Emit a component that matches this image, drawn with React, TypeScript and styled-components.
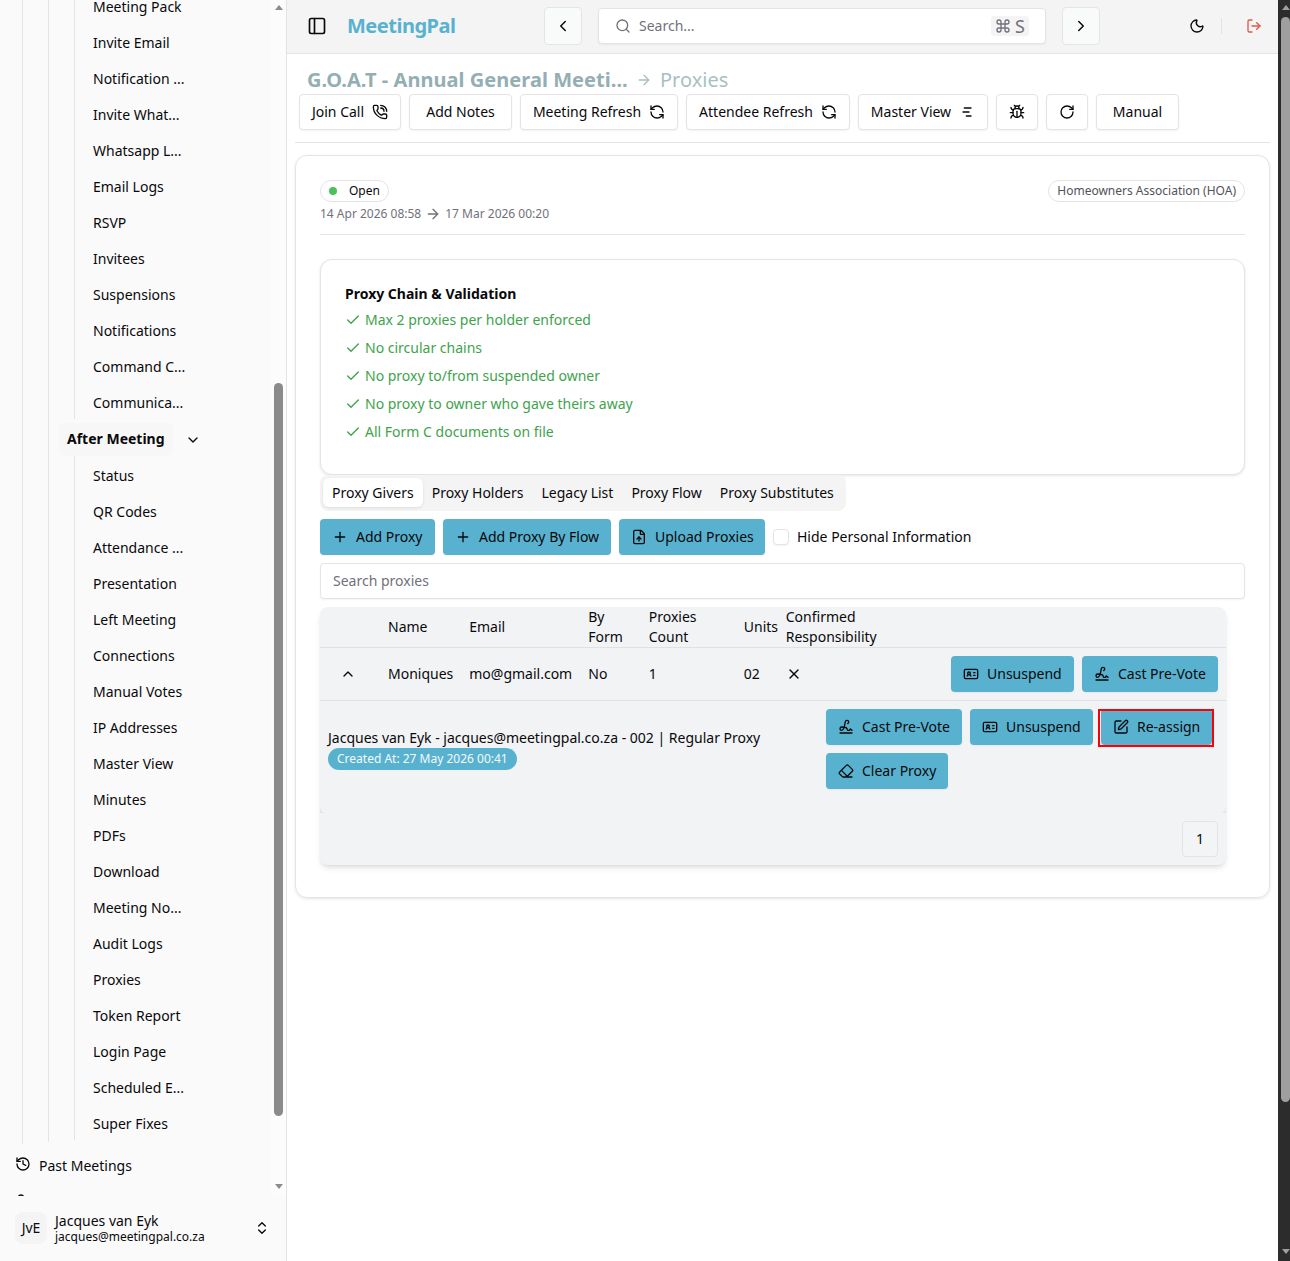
import styled, { createGlobalStyle } from "styled-components";
import {
  ArrowRight,
  Bug,
  Check,
  ChevronDown,
  ChevronLeft,
  ChevronRight,
  ChevronsUpDown,
  ChevronUp,
  Command,
  Eraser,
  FileUp,
  History,
  IdCard,
  LogOut,
  Moon,
  PanelLeft,
  PhoneCall,
  Plus,
  RefreshCcw,
  RotateCw,
  Search,
  Signature,
  SquarePen,
  UserPlus,
  X,
} from "lucide-react";

const GlobalStyle = createGlobalStyle`
  * {
    box-sizing: border-box;
  }

  body {
    margin: 0;
    background: #ffffff;
    color: #09090b;
    font-family: "Noto Sans", sans-serif;
    font-size: 14px;
    line-height: 20px;
    overflow: hidden;
  }

  button, input {
    font: inherit;
    color: inherit;
  }

  svg {
    flex-shrink: 0;
  }
`;

const Page = styled.div`
  display: flex;
  width: 1290px;
  height: 1261px;
  overflow: hidden;
`;

/* sidebar */

const Sidebar = styled.aside`
  display: flex;
  flex-direction: column;
  width: 287px;
  flex-shrink: 0;
  background: #fafafa;
  border-right: 1px solid #e4e4e7;
`;

const SidebarScroll = styled.div`
  display: flex;
  height: 1196px;
  overflow: hidden;
`;

const SidebarMenu = styled.nav`
  flex: 1;
`;

const Branch = styled.div`
  margin-left: 25px;
  padding-bottom: 2px;
  border-left: 1px solid #e4e4e7;
`;

const RootBranch = styled(Branch)`
  margin-left: 22px;
`;

const SubList = styled.ul<{ $first?: boolean }>`
  display: flex;
  flex-direction: column;
  gap: 2px;
  margin: ${(p) => (p.$first ? "-11px" : "0")} 0 0 25px;
  padding: ${(p) => (p.$first ? "0" : "2px")} 0 0 18px;
  border-left: 1px solid #e4e4e7;
  list-style: none;
`;

const SubItem = styled.li`
  height: 34px;
  line-height: 36px;
  white-space: nowrap;
`;

const GroupRow = styled.div`
  display: flex;
  align-items: center;
  gap: 12px;
  margin: 4px 0 0 10px;
`;

const GroupLabel = styled.div`
  height: 33px;
  padding: 0 8px;
  line-height: 32px;
  font-weight: 700;
  width: 114px;
  white-space: nowrap;
  background: #f7f7f8;
  border-radius: 6px;
`;

const MenuRow = styled.div`
  display: flex;
  align-items: center;
  gap: 8px;
  height: 32px;
  margin: 6px 0 0 15px;

  svg {
    margin-top: -4px;
  }

  & + & {
    margin-top: 5px;
  }
`;

const ScrollTrack = styled.div<{ $dark?: boolean }>`
  display: flex;
  flex-direction: column;
  align-items: ${(p) => (p.$dark ? "flex-end" : "center")};
  width: ${(p) => (p.$dark ? "12px" : "15px")};
  height: 100%;
  flex-shrink: 0;
  background: ${(p) => (p.$dark ? "#2c2c2c" : "#fcfcfc")};
`;

const ScrollArrow = styled.div<{ $down?: boolean; $dark?: boolean }>`
  width: 0;
  height: 0;
  margin: ${(p) => (p.$down ? "auto 0 7px" : "5px 0 0")};
  border: solid transparent;
  border-width: ${(p) => (p.$down ? "5px 4.5px 0" : "0 4.5px 5px")};
  border-top-color: ${(p) => (p.$down ? (p.$dark ? "#a0a0a0" : "#8b8b8b") : "transparent")};
  border-bottom-color: ${(p) => (p.$down ? "transparent" : p.$dark ? "#a0a0a0" : "#8b8b8b")};
`;

const ScrollThumb = styled.div<{ $top: number; $height: number; $dark?: boolean }>`
  width: 9px;
  height: ${(p) => p.$height}px;
  margin-top: ${(p) => p.$top}px;
  border-radius: 5px;
  background: ${(p) => (p.$dark ? "#9f9f9f" : "#8b8b8b")};
`;

const UserRow = styled.div`
  display: flex;
  align-items: center;
  height: 64px;
  padding: 0 16px 0 15px;
`;

const Avatar = styled.div`
  width: 32px;
  height: 32px;
  line-height: 32px;
  text-align: center;
  background: #f4f4f5;
  border-radius: 8px;
`;

const UserText = styled.div`
  flex: 1;
  margin-left: 8px;
  line-height: 17px;
`;

const UserEmail = styled.div`
  font-size: 12px;
  line-height: 15px;
`;

/* main column */

const Main = styled.main`
  flex: 1;
  min-width: 0;
`;

const TopBar = styled.header`
  display: flex;
  align-items: center;
  height: 54px;
  padding: 0 16px 1px 20px;
  background: #f4f4f5;
  border-bottom: 1px solid #e4e4e7;
`;

const Brand = styled.div`
  width: 197px;
  margin-left: 20px;
  font-size: 20px;
  font-weight: 700;
  letter-spacing: -0.5px;
  color: #58b2cf;
`;

const NavButton = styled.button`
  display: flex;
  align-items: center;
  justify-content: center;
  width: 38px;
  height: 38px;
  padding: 0;
  background: #f9fafa;
  border: 1px solid #e4e4e7;
  border-radius: 4px;
`;

const SearchBox = styled.div`
  display: flex;
  align-items: center;
  gap: 8px;
  width: 448px;
  height: 36px;
  margin: 0 16px;
  padding: 0 16px;
  color: #71717a;
  background: #ffffff;
  border: 1px solid #e4e4e7;
  border-radius: 4px;
  box-shadow: 0 1px 2px rgba(0, 0, 0, 0.05);
`;

const Shortcut = styled.kbd`
  display: flex;
  align-items: center;
  gap: 4px;
  height: 20px;
  margin-left: auto;
  padding: 0 4px;
  font-family: inherit;
  font-size: 18px;
  background: #f4f4f5;
  border-radius: 3px;
`;

const TopActions = styled.div`
  display: flex;
  align-items: center;
  margin-left: auto;
`;

const Divider = styled.div`
  width: 1px;
  height: 16px;
  margin: 0 24px 0 16px;
  background: #e4e4e7;
`;

const Content = styled.div`
  padding: 12px 8px;
`;

const Crumbs = styled.div`
  display: flex;
  align-items: center;
  gap: 8px;
  height: 28px;
  padding-left: 12px;
  font-size: 20px;
  color: #a9bfc2;

  b {
    width: 321px;
    letter-spacing: 0.04px;
    color: #94afb3;
    white-space: nowrap;
  }
`;

const Toolbar = styled.div`
  display: flex;
  gap: 8px;
  height: 49px;
  padding-left: 4px;
  border-bottom: 1px solid #e4e4e7;
`;

const OutlineButton = styled.button<{ $width: number }>`
  display: flex;
  align-items: center;
  justify-content: center;
  gap: 8px;
  width: ${(p) => p.$width}px;
  height: 36px;
  padding: 0;
  white-space: nowrap;
  background: #ffffff;
  border: 1px solid #e4e4e7;
  border-radius: 4px;
  box-shadow: 0 1px 2px rgba(0, 0, 0, 0.05);
`;

const Card = styled.section`
  height: 743px;
  margin-top: 12px;
  padding: 24px;
  border: 1px solid #e4e4e7;
  border-radius: 12px;
  box-shadow: 0 1px 3px rgba(0, 0, 0, 0.1);
`;

const StatusRow = styled.div`
  display: flex;
  justify-content: space-between;
`;

const Badge = styled.span<{ $muted?: boolean }>`
  display: flex;
  align-items: center;
  height: 22px;
  padding: 0 8px;
  font-size: 12px;
  color: ${(p) => (p.$muted ? "#52525b" : "#09090b")};
  border: 1px solid #e4e4e7;
  border-radius: 11px;
`;

const Dot = styled.span`
  width: 8px;
  height: 8px;
  margin-right: 12px;
  background: #4ac25a;
  border-radius: 50%;
`;

const Dates = styled.div`
  display: flex;
  align-items: center;
  gap: 4px;
  height: 33px;
  padding-bottom: 9px;
  font-size: 12px;
  color: #71717a;
  border-bottom: 1px solid #e4e4e7;
`;

const RulesCard = styled.section`
  height: 216px;
  margin-top: 24px;
  padding: 24px;
  background: #ffffff;
  border: 1px solid #e4e4e7;
  border-radius: 12px;
  box-shadow: 0 1px 3px rgba(0, 0, 0, 0.1);
`;

const RulesTitle = styled.h3`
  margin: 0 0 2px;
  font-size: 14px;
  font-weight: 700;
  line-height: 20px;
`;

const Rule = styled.div`
  display: flex;
  align-items: center;
  gap: 4px;
  height: 28px;
  color: #3ea34c;
`;

const Tabs = styled.div`
  display: flex;
  width: 526px;
  height: 36px;
  padding: 3px;
  background: #f4f4f5;
  border-radius: 8px;
`;

const Tab = styled.div<{ $active?: boolean }>`
  height: 29px;
  padding: 0 9px;
  line-height: 29px;
  white-space: nowrap;
  background: ${(p) => (p.$active ? "#ffffff" : "none")};
  border-radius: 6px;
  box-shadow: ${(p) => (p.$active ? "0 1px 3px rgba(0, 0, 0, 0.1)" : "none")};
`;

const Actions = styled.div`
  display: flex;
  align-items: center;
  gap: 8px;
  margin: 8px 0;
`;

const PrimaryButton = styled.button<{ $width: number }>`
  display: flex;
  align-items: center;
  gap: 8px;
  width: ${(p) => p.$width}px;
  height: 36px;
  padding: 0 12px;
  white-space: nowrap;
  background: #58b2cf;
  border: none;
  border-radius: 4px;
  box-shadow: 0 1px 2px rgba(0, 0, 0, 0.05);
`;

const Checkbox = styled.span`
  width: 16px;
  height: 16px;
  border: 1px solid #e4e4e7;
  border-radius: 4px;
  background: #ffffff;
  box-shadow: 0 1px 2px rgba(0, 0, 0, 0.05);
`;

const ProxySearch = styled.input`
  display: block;
  width: 100%;
  height: 36px;
  padding: 0 12px 2px;
  border: 1px solid #e4e4e7;
  border-radius: 4px;
  box-shadow: 0 1px 2px rgba(0, 0, 0, 0.05);

  &::placeholder {
    color: #71717a;
  }
`;

const Table = styled.div`
  width: 906px;
  height: 258px;
  margin-top: 8px;
  background: #f2f3f5;
  border-radius: 8px;
  box-shadow: 0 4px 6px -1px rgba(0, 0, 0, 0.1), 0 2px 4px -2px rgba(0, 0, 0, 0.1);
`;

const TableRow = styled.div<{ $height: number }>`
  display: grid;
  grid-template-columns: 60px 81.25px 119px 60.5px 95px 42px 1fr;
  align-items: center;
  height: ${(p) => p.$height}px;
  padding: 0 8px;
  border-bottom: 1px solid #e0e1e4;
`;

const RowActions = styled.div`
  display: flex;
  align-items: center;
  gap: 8px;

  > svg {
    margin-right: auto;
  }
`;

const ExpandCell = styled.div`
  padding-left: 12px;
  display: flex;
`;

const ExpandedWrap = styled.div`
  background: #e4e5e8;
`;

const Expanded = styled.div`
  display: flex;
  height: 112px;
  padding: 8px;
  background: #f2f3f5;
  border-radius: 0 0 6px 6px;
`;

const ProxyInfo = styled.div`
  width: 498px;
  padding-top: 19px;
`;

const CreatedBadge = styled.div`
  width: 189px;
  height: 22px;
  line-height: 21px;
  padding-left: 9px;
  font-size: 12px;
  color: #f4fafc;
  background: #58b2cf;
  border-radius: 11px;
`;

const ProxyActions = styled.div`
  display: flex;
  flex-wrap: wrap;
  align-content: flex-start;
  gap: 8px;
  flex: 1;
`;

const Highlight = styled.div`
  position: relative;

  &::after {
    content: "";
    position: absolute;
    inset: 0 -2px -2px -3px;
    border: 2px solid #fb0007;
  }
`;

const Pagination = styled.div`
  display: flex;
  justify-content: flex-end;
  padding: 8px;
`;

const PageButton = styled.button`
  width: 36px;
  height: 36px;
  padding: 0;
  background: #f3f4f6;
  border: 1px solid #e4e4e7;
  border-radius: 4px;
`;

const beforeItems = [
  "Meeting Pack",
  "Invite Email",
  "Notification ...",
  "Invite What...",
  "Whatsapp L...",
  "Email Logs",
  "RSVP",
  "Invitees",
  "Suspensions",
  "Notifications",
  "Command C...",
  "Communica...",
];

const afterItems = [
  "Status",
  "QR Codes",
  "Attendance ...",
  "Presentation",
  "Left Meeting",
  "Connections",
  "Manual Votes",
  "IP Addresses",
  "Master View",
  "Minutes",
  "PDFs",
  "Download",
  "Meeting No...",
  "Audit Logs",
  "Proxies",
  "Token Report",
  "Login Page",
  "Scheduled E...",
  "Super Fixes",
];

const rules = [
  "Max 2 proxies per holder enforced",
  "No circular chains",
  "No proxy to/from suspended owner",
  "No proxy to owner who gave theirs away",
  "All Form C documents on file",
];

const tabs = ["Proxy Givers", "Proxy Holders", "Legacy List", "Proxy Flow", "Proxy Substitutes"];

function GanttIcon() {
  return (
    <svg
      width="16"
      height="16"
      viewBox="0 0 24 24"
      fill="none"
      stroke="currentColor"
      strokeWidth="2"
      strokeLinecap="round"
    >
      <path d="M8 6h10" />
      <path d="M6 12h9" />
      <path d="M11 18h7" />
    </svg>
  );
}

function AppSidebar() {
  return (
    <Sidebar>
      <SidebarScroll>
        <SidebarMenu>
          <RootBranch>
            <Branch>
              <SubList $first>
                {beforeItems.map((item) => (
                  <SubItem key={item}>{item}</SubItem>
                ))}
              </SubList>
              <GroupRow>
                <GroupLabel>After Meeting</GroupLabel>
                <ChevronDown size={16} />
              </GroupRow>
              <SubList>
                {afterItems.map((item) => (
                  <SubItem key={item}>{item}</SubItem>
                ))}
              </SubList>
            </Branch>
          </RootBranch>
          <MenuRow>
            <History size={16} />
            Past Meetings
          </MenuRow>
          <MenuRow>
            <UserPlus size={16} />
          </MenuRow>
        </SidebarMenu>
        <ScrollTrack>
          <ScrollArrow />
          <ScrollThumb $top={373} $height={733} />
          <ScrollArrow $down />
        </ScrollTrack>
      </SidebarScroll>
      <UserRow>
        <Avatar>JvE</Avatar>
        <UserText>
          Jacques van Eyk
          <UserEmail>jacques@meetingpal.co.za</UserEmail>
        </UserText>
        <ChevronsUpDown size={16} />
      </UserRow>
    </Sidebar>
  );
}

function AppTopBar() {
  return (
    <TopBar>
      <PanelLeft size={20} />
      <Brand>MeetingPal</Brand>
      <NavButton>
        <ChevronLeft size={18} />
      </NavButton>
      <SearchBox>
        <Search size={16} />
        Search...
        <Shortcut>
          <Command size={16} />S
        </Shortcut>
      </SearchBox>
      <NavButton>
        <ChevronRight size={18} />
      </NavButton>
      <TopActions>
        <Moon size={16} />
        <Divider />
        <LogOut size={16} color="#e2574c" />
      </TopActions>
    </TopBar>
  );
}

function ProxyTable() {
  return (
    <Table>
      <TableRow $height={41}>
        <span />
        <span>Name</span>
        <span>Email</span>
        <span>
          By
          <br />
          Form
        </span>
        <span>
          Proxies
          <br />
          Count
        </span>
        <span>Units</span>
        <span>
          Confirmed
          <br />
          Responsibility
        </span>
      </TableRow>
      <TableRow $height={53}>
        <ExpandCell>
          <ChevronUp size={16} />
        </ExpandCell>
        <span>Moniques</span>
        <span>mo@gmail.com</span>
        <span>No</span>
        <span>1</span>
        <span>02</span>
        <RowActions>
          <X size={16} />
          <PrimaryButton $width={123}>
            <IdCard size={16} />
            Unsuspend
          </PrimaryButton>
          <PrimaryButton $width={136}>
            <Signature size={16} />
            Cast Pre-Vote
          </PrimaryButton>
        </RowActions>
      </TableRow>
      <ExpandedWrap>
        <Expanded>
          <ProxyInfo>
            Jacques van Eyk - jacques@meetingpal.co.za - 002 | Regular Proxy
            <CreatedBadge>Created At: 27 May 2026 00:41</CreatedBadge>
          </ProxyInfo>
          <ProxyActions>
            <PrimaryButton $width={136}>
              <Signature size={16} />
              Cast Pre-Vote
            </PrimaryButton>
            <PrimaryButton $width={123}>
              <IdCard size={16} />
              Unsuspend
            </PrimaryButton>
            <Highlight>
              <PrimaryButton $width={111}>
                <SquarePen size={16} />
                Re-assign
              </PrimaryButton>
            </Highlight>
            <PrimaryButton $width={122}>
              <Eraser size={16} />
              Clear Proxy
            </PrimaryButton>
          </ProxyActions>
        </Expanded>
      </ExpandedWrap>
      <Pagination>
        <PageButton>1</PageButton>
      </Pagination>
    </Table>
  );
}

export default function App() {
  return (
    <>
      <GlobalStyle />
      <Page>
        <AppSidebar />
        <Main>
          <AppTopBar />
          <Content>
            <Crumbs>
              <b>G.O.A.T - Annual General Meeti...</b>
              <ArrowRight size={16} />
              Proxies
            </Crumbs>
            <Toolbar>
              <OutlineButton $width={102}>
                Join Call
                <PhoneCall size={16} />
              </OutlineButton>
              <OutlineButton $width={103}>Add Notes</OutlineButton>
              <OutlineButton $width={158}>
                Meeting Refresh
                <RefreshCcw size={16} />
              </OutlineButton>
              <OutlineButton $width={164}>
                Attendee Refresh
                <RefreshCcw size={16} />
              </OutlineButton>
              <OutlineButton $width={130}>
                Master View
                <GanttIcon />
              </OutlineButton>
              <OutlineButton $width={42}>
                <Bug size={16} />
              </OutlineButton>
              <OutlineButton $width={42}>
                <RotateCw size={16} />
              </OutlineButton>
              <OutlineButton $width={83}>Manual</OutlineButton>
            </Toolbar>
            <Card>
              <StatusRow>
                <Badge>
                  <Dot />
                  Open
                </Badge>
                <Badge $muted>Homeowners Association (HOA)</Badge>
              </StatusRow>
              <Dates>
                14 Apr 2026 08:58
                <ArrowRight size={16} />
                17 Mar 2026 00:20
              </Dates>
              <RulesCard>
                <RulesTitle>Proxy Chain &amp; Validation</RulesTitle>
                {rules.map((rule) => (
                  <Rule key={rule}>
                    <Check size={16} />
                    {rule}
                  </Rule>
                ))}
              </RulesCard>
              <Tabs>
                {tabs.map((tab, i) => (
                  <Tab key={tab} $active={i === 0}>
                    {tab}
                  </Tab>
                ))}
              </Tabs>
              <Actions>
                <PrimaryButton $width={115}>
                  <Plus size={16} />
                  Add Proxy
                </PrimaryButton>
                <PrimaryButton $width={168}>
                  <Plus size={16} />
                  Add Proxy By Flow
                </PrimaryButton>
                <PrimaryButton $width={146}>
                  <FileUp size={16} />
                  Upload Proxies
                </PrimaryButton>
                <Checkbox />
                Hide Personal Information
              </Actions>
              <ProxySearch placeholder="Search proxies" />
              <ProxyTable />
            </Card>
          </Content>
        </Main>
        <ScrollTrack $dark>
          <ScrollArrow $dark />
          <ScrollThumb $dark $top={7} $height={1085} />
          <ScrollArrow $dark $down />
        </ScrollTrack>
      </Page>
    </>
  );
}
